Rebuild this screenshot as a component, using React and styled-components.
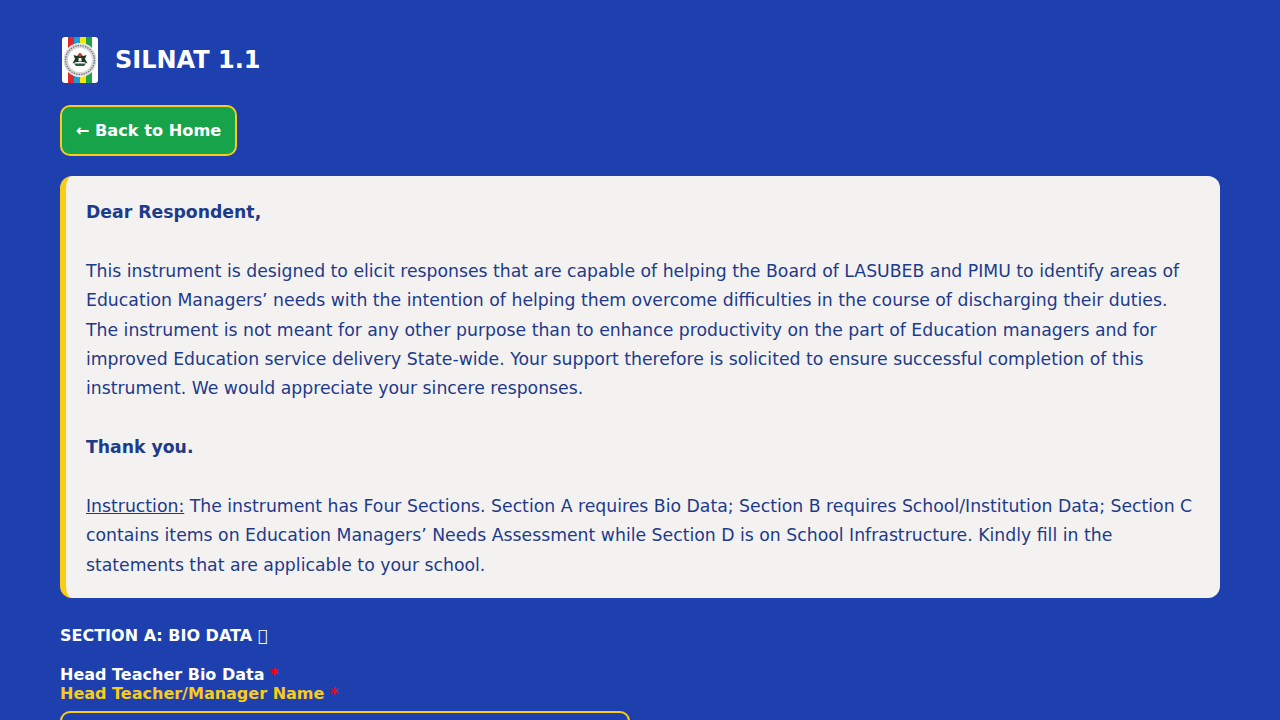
import React from "react";
import styled, { createGlobalStyle } from "styled-components";

const GlobalStyle = createGlobalStyle`
  html, body {
    margin: 0;
    background: #1e40af;
    font-family: "DejaVu Sans", sans-serif;
    overflow: hidden;
  }
`;

const Logo = () => (
  <LogoSvg viewBox="0 0 36 46">
    <rect width="36" height="46" rx="3" fill="#fff" />
    <rect x="6" y="0" width="6" height="46" fill="#e0282a" />
    <rect x="12" y="0" width="6" height="46" fill="#1f9bd7" />
    <rect x="18" y="0" width="6" height="46" fill="#f6e60c" />
    <rect x="24" y="0" width="6" height="46" fill="#1fa34a" />
    <circle cx="18" cy="23" r="17" fill="#fff" />
    <circle cx="18" cy="23" r="14.2" fill="none" stroke="#d8d8d8" strokeWidth="4.4" />
    <circle cx="18" cy="23" r="14.4" fill="none" stroke="#77777c" strokeWidth="1.4" strokeDasharray="1.4 1.1" />
    <circle cx="18" cy="23" r="11.2" fill="#fff" />
    <path d="M11.500 18l3.500 1 3-2.500 3 2.500 3.500-1-1.500 4 2.500 4.500-4-1.500h-7l-4 1.500 2.500-4.500z" fill="#1a3a26" />
    <path d="M15.500 18L18 15.500l2.500 2.500L18 20z" fill="#c9402e" />
    <path d="M16.500 21h3v3.500h-3z" fill="#f2f2f2" />
    <path d="M12 26.500h12l-2 2.500h-8z" fill="#2a5a3a" />
  </LogoSvg>
);

export default function App() {
  return (
    <Page>
      <GlobalStyle />
      <Brand>
        <Logo />
        <Title>SILNAT 1.1</Title>
      </Brand>
      <BackButton type="button">← Back to Home</BackButton>
      <Notice>
        <strong>Dear Respondent,</strong>
        <br />
        <br />
        This instrument is designed to elicit responses that are capable of helping the Board of
        LASUBEB and PIMU to identify areas of Education Managers’ needs with the intention of
        helping them overcome difficulties in the course of discharging their duties. The
        instrument is not meant for any other purpose than to enhance productivity on the part of
        Education managers and for improved Education service delivery State-wide. Your support
        therefore is solicited to ensure successful completion of this instrument. We would
        appreciate your sincere responses.
        <br />
        <br />
        <strong>Thank you.</strong>
        <br />
        <br />
        <u>Instruction:</u> The instrument has Four Sections. Section A requires Bio Data; Section
        B requires School/Institution Data; Section C contains items on Education Managers’ Needs
        Assessment while Section D is on School Infrastructure. Kindly fill in the statements that
        are applicable to your school.
      </Notice>
      <SectionTitle>SECTION A: BIO DATA {"\u{10FFFD}"}</SectionTitle>
      <FieldLabel>
        Head Teacher Bio Data <Required>*</Required>
      </FieldLabel>
      <FieldLabel $accent>
        Head Teacher/Manager Name <Required>*</Required>
      </FieldLabel>
      <TextInput type="text" />
    </Page>
  );
}

const Page = styled.div`
  box-sizing: border-box;
  height: 720px;
  overflow: hidden;
  padding: 36px 60px 0;
  display: flex;
  flex-direction: column;
  align-items: flex-start;
`;

const Brand = styled.div`
  display: flex;
  align-items: center;
  gap: 17px;
  flex: none;
  height: 48px;
  margin-bottom: 21px;
`;

const LogoSvg = styled.svg`
  width: 36px;
  height: 46px;
  margin-left: 2px;
  display: block;
`;

const Title = styled.h1`
  margin: 0;
  font-size: 24px;
  font-weight: 700;
  color: #fff;
`;

const BackButton = styled.button`
  box-sizing: border-box;
  flex: none;
  height: 51px;
  width: 177px;
  padding: 0;
  background: #16a34a;
  border: 2px solid #facc15;
  border-radius: 10px;
  color: #fff;
  font-family: inherit;
  font-size: 16.2px;
  font-weight: 700;
  margin-bottom: 20px;
`;

const Notice = styled.div`
  box-sizing: border-box;
  flex: none;
  width: 100%;
  padding: 22px 20px 18px;
  background: #f3f2f0;
  border-left: 6px solid #facc15;
  border-radius: 12px;
  color: #1e3a8a;
  font-size: 17.28px;
  line-height: 1.7;
  margin-bottom: 28px;
`;

const SectionTitle = styled.div`
  flex: none;
  font-size: 16px;
  font-weight: 700;
  line-height: 19px;
  color: #fff;
  margin-bottom: 20px;
`;

const FieldLabel = styled.label`
  display: block;
  flex: none;
  font-size: 16px;
  font-weight: 700;
  line-height: 19px;
  color: ${(p) => (p.$accent ? "#facc15" : "#fff")};
`;

const Required = styled.span`
  color: #ff0000;
`;

const TextInput = styled.input`
  box-sizing: border-box;
  flex: none;
  width: 570px;
  height: 44px;
  margin-top: 8px;
  background: #1e40af;
  border: 2px solid #facc15;
  border-radius: 10px;
`;
